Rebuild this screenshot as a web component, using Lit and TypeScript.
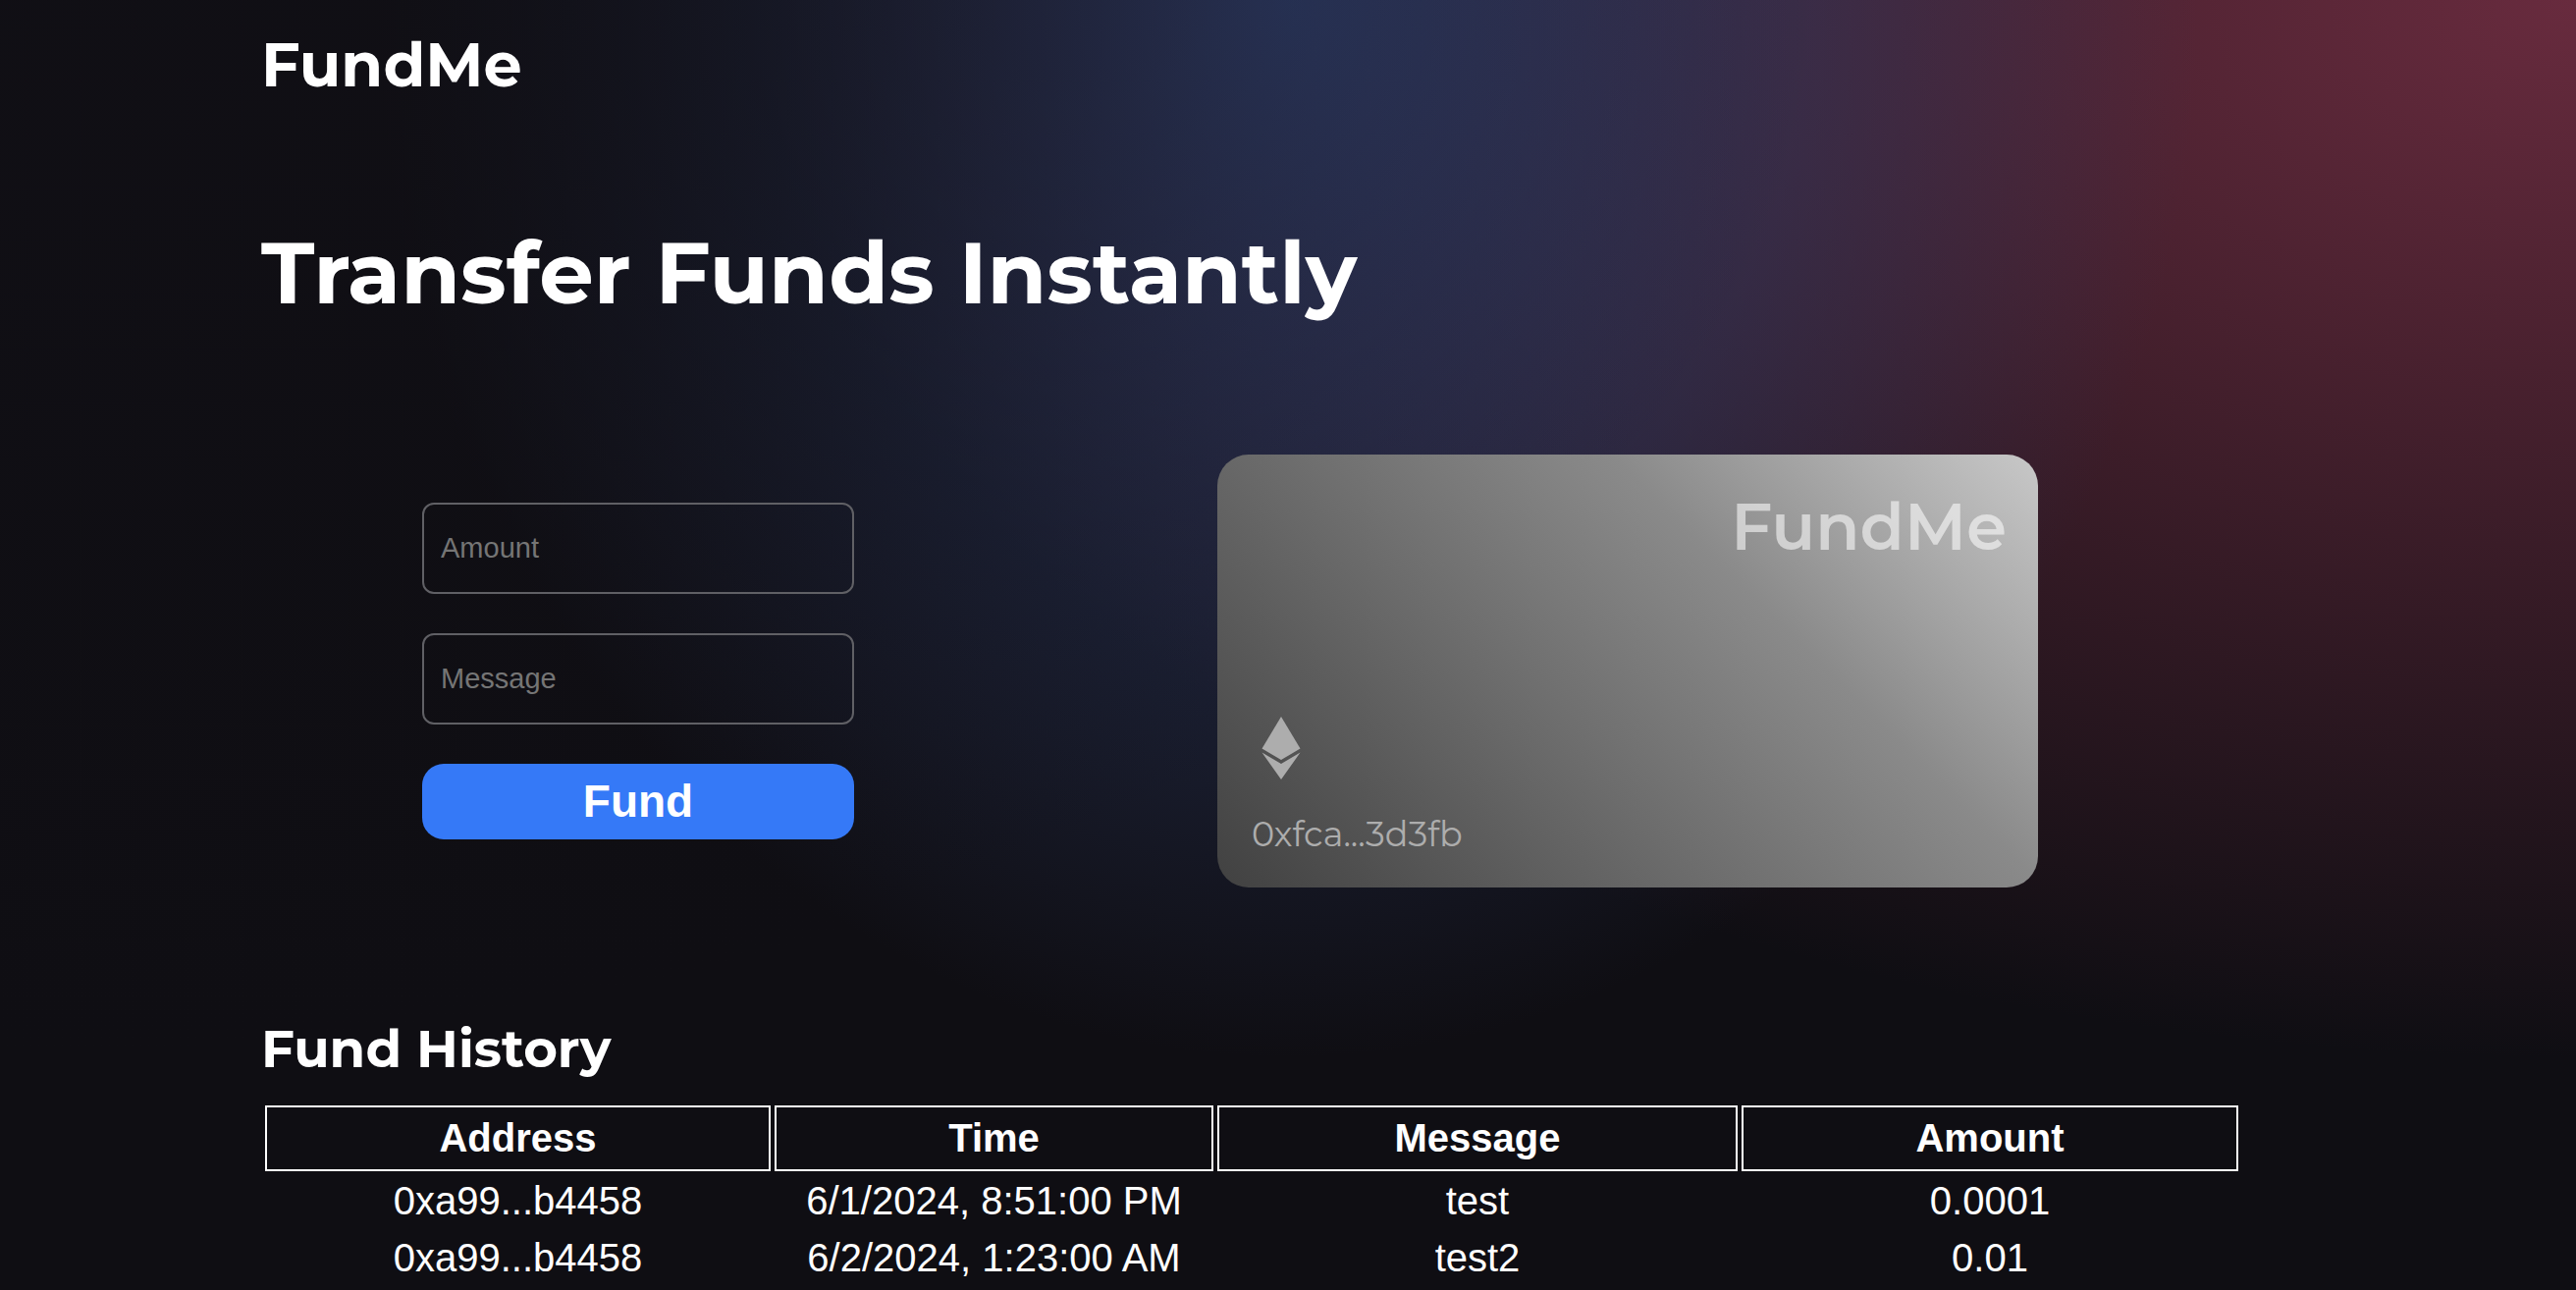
import { LitElement, html, css } from "lit";
import { customElement, property } from "lit/decorators.js";

interface FundRecord {
  address: string;
  time: string;
  message: string;
  amount: string;
}

const RECORDS: FundRecord[] = [
  { address: "0xa99...b4458", time: "6/1/2024, 8:51:00 PM", message: "test", amount: "0.0001" },
  { address: "0xa99...b4458", time: "6/2/2024, 1:23:00 AM", message: "test2", amount: "0.01" },
];

@customElement("fund-form")
class FundForm extends LitElement {
  static styles = css`
    :host {
      display: block;
    }
    .form {
      display: flex;
      flex-direction: column;
      gap: 40px;
    }
    .input {
      display: block;
      box-sizing: border-box;
      width: 100%;
      margin: 0;
      padding: 28px 17px;
      border: 2px solid #606065;
      border-radius: 12px;
      background: transparent;
      color: #fff;
      font: 29px/33px "Liberation Sans", Arial, sans-serif;
    }
    .input::placeholder {
      color: #757575;
      opacity: 1;
    }
    .submit {
      padding: 12px;
      border: 0;
      border-radius: 22px;
      background: #3579f7;
      color: #fff;
      font: bold 46px/53px "Liberation Sans", Arial, sans-serif;
      cursor: pointer;
    }
  `;

  render() {
    return html`
      <form class="form" @submit=${(e: Event) => e.preventDefault()}>
        <input class="input" type="text" inputmode="decimal" placeholder="Amount" aria-label="Amount" />
        <input class="input" type="text" placeholder="Message" aria-label="Message" />
        <button class="submit" type="submit">Fund</button>
      </form>
    `;
  }
}

@customElement("wallet-card")
class WalletCard extends LitElement {
  @property() address = "";

  static styles = css`
    :host {
      display: block;
    }
    .card {
      display: flex;
      flex-direction: column;
      justify-content: space-between;
      box-sizing: border-box;
      min-height: 441px;
      padding: 34px 32px 32px;
      border-radius: 32px;
      background: linear-gradient(45deg, #414141 0%, #8a8a8a 66%, #c8c8c8 100%);
      font-family: Montserrat, Inter, sans-serif;
    }
    .brand {
      align-self: flex-end;
      color: rgba(255, 255, 255, 0.56);
      font-size: 66px;
      font-weight: 600;
      line-height: 80px;
    }
    .details {
      display: flex;
      flex-direction: column;
      gap: 34px;
      color: #adadad;
    }
    .eth {
      display: block;
      width: 40px;
      height: 64px;
      margin-left: 13px;
      fill: currentColor;
    }
    .address {
      font-size: 35px;
      line-height: 44px;
      padding-left: 3px;
    }
  `;

  render() {
    return html`
      <div class="card">
        <div class="brand">FundMe</div>
        <div class="details">
          <svg class="eth" viewBox="0 0 40 64" aria-hidden="true">
            <path d="M20 0 39.5 32.5 20 44 .5 32.5Z" />
            <path d="M.5 36.5 20 48 39.5 36.5 20 64Z" />
          </svg>
          <div class="address">${this.address}</div>
        </div>
      </div>
    `;
  }
}

@customElement("fund-history")
class FundHistory extends LitElement {
  @property({ attribute: false }) records: FundRecord[] = [];

  static styles = css`
    :host {
      display: block;
    }
    .title {
      margin: 0;
      padding-bottom: 22px;
      font: bold 53px/64px Montserrat, Inter, sans-serif;
    }
    .table {
      width: 100%;
      table-layout: fixed;
      border-collapse: separate;
      border-spacing: 4px;
      font: 40px/46px "Liberation Sans", Arial, sans-serif;
      text-align: center;
    }
    .col-address {
      width: 515px;
    }
    .col-time {
      width: 447px;
    }
    .col-message {
      width: 530px;
    }
    .col-amount {
      width: 506px;
    }
    .head {
      padding: 8px 8px 9px;
      border: 2px solid #fff;
      font-weight: bold;
    }
    .cell {
      padding: 3px 4px 5px;
    }
  `;

  render() {
    return html`
      <h2 class="title">Fund History</h2>
      <table class="table">
        <colgroup>
          <col class="col-address" />
          <col class="col-time" />
          <col class="col-message" />
          <col class="col-amount" />
        </colgroup>
        <thead>
          <tr>
            <th class="head" scope="col">Address</th>
            <th class="head" scope="col">Time</th>
            <th class="head" scope="col">Message</th>
            <th class="head" scope="col">Amount</th>
          </tr>
        </thead>
        <tbody>
          ${this.records.map(
            (r) => html`
              <tr>
                <td class="cell">${r.address}</td>
                <td class="cell">${r.time}</td>
                <td class="cell">${r.message}</td>
                <td class="cell">${r.amount}</td>
              </tr>
            `,
          )}
        </tbody>
      </table>
    `;
  }
}

@customElement("app-root")
class AppRoot extends LitElement {
  static styles = css`
    :host {
      display: block;
      box-sizing: border-box;
      min-height: 100vh;
      padding: 26px 340px 0 266px;
      color: #fff;
      background-color: #0f0e13;
      background-image: radial-gradient(at 0% 0%, hsla(253, 16%, 7%, 1) 0, transparent 50%),
        radial-gradient(at 50% 0%, hsla(225, 39%, 30%, 1) 0, transparent 50%),
        radial-gradient(at 100% 0%, #682b3e 0, transparent 50%);
      background-size: 100% 116%;
      background-repeat: no-repeat;
    }
    .logo {
      font: bold 62px/80px Montserrat, Inter, sans-serif;
      color: inherit;
      text-decoration: none;
    }
    .header {
      display: flex;
    }
    .hero {
      margin: 0;
      padding: 116px 0 129px;
      font: bold 88px/112px Montserrat, Inter, sans-serif;
    }
    .main {
      display: grid;
      grid-template-columns: 440px 836px;
      justify-content: space-between;
      align-items: center;
      padding: 0 208px 132px 164px;
    }
  `;

  render() {
    return html`
      <header class="header"><a class="logo" href="#">FundMe</a></header>
      <main>
        <h1 class="hero">Transfer Funds Instantly</h1>
        <section class="main">
          <fund-form></fund-form>
          <wallet-card address="0xfca...3d3fb"></wallet-card>
        </section>
        <fund-history .records=${RECORDS}></fund-history>
      </main>
    `;
  }
}
